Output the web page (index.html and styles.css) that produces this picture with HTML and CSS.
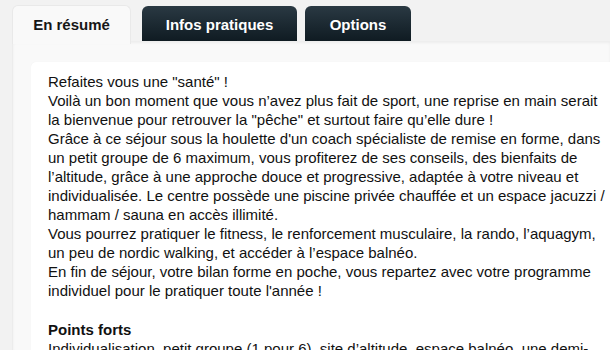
FILE: index.html
```html
<!DOCTYPE html>
<html lang="fr">
<head>
<meta charset="utf-8">
<title>Séjour forme</title>
<link rel="stylesheet" href="styles.css">
</head>
<body>
<div class="page">
  <ul class="tabs">
    <li class="tab tab-active">En résumé</li>
    <li class="tab tab-dark tab-infos">Infos pratiques</li>
    <li class="tab tab-dark tab-options">Options</li>
  </ul>
  <div class="panel">
    <div class="card">
      <p class="text">Refaites vous une "santé" !<br>
Voilà un bon moment que vous n’avez plus fait de sport, une reprise en main serait<br>
la bienvenue pour retrouver la "pêche" et surtout faire qu’elle dure !<br>
Grâce à ce séjour sous la houlette d'un coach spécialiste de remise en forme, dans<br>
un petit groupe de 6 maximum, vous profiterez de ses conseils, des bienfaits de<br>
l’altitude, grâce à une approche douce et progressive, adaptée à votre niveau et<br>
individualisée. Le centre possède une piscine privée chauffée et un espace jacuzzi /<br>
hammam / sauna en accès illimité.<br>
Vous pourrez pratiquer le fitness, le renforcement musculaire, la rando, l’aquagym,<br>
un peu de nordic walking, et accéder à l’espace balnéo.<br>
En fin de séjour, votre bilan forme en poche, vous repartez avec votre programme<br>
individuel pour le pratiquer toute l'année !</p>
      <h3 class="heading">Points forts</h3>
      <p class="text">Individualisation, petit groupe (1 pour 6), site d’altitude, espace balnéo, une demi-</p>
    </div>
  </div>
</div>
</body>
</html>
```
FILE: styles.css
```css
html, body {
  margin: 0;
  padding: 0;
  background: #f2f2f2;
  overflow: hidden;
}

.page {
  box-sizing: border-box;
  width: 610px;
  height: 350px;
  overflow: hidden;
  padding: 5px 0 0 12px;
  font-family: "Liberation Sans", Arial, Helvetica, sans-serif;
}

.tabs {
  display: flex;
  align-items: flex-end;
  list-style: none;
  margin: 0;
  padding: 0;
  height: 36px;
}

.tab {
  font-size: 15px;
  font-weight: bold;
  text-align: center;
  border-radius: 6px 6px 0 0;
  box-sizing: border-box;
}

.tab-active {
  width: 119px;
  height: 39px;
  padding-top: 2px;
  line-height: 34px;
  margin-right: 11px;
  margin-bottom: -3px;
  color: #161616;
  background: #f9f9f9;
  border: 1px solid #e9e9e9;
  border-bottom: none;
  position: relative;
  z-index: 1;
}

.tab-dark {
  height: 35px;
  padding-top: 2px;
  line-height: 33px;
  color: #ffffff;
  background: linear-gradient(#2a3943, #0f1b22);
}

.tab-infos {
  width: 155px;
  margin-right: 8px;
}

.tab-options {
  width: 106px;
}

.panel {
  background: #f9f9f9;
  border-left: 1px solid #ececec;
  box-shadow: inset 0 2px 3px rgba(0, 0, 0, 0.05);
  padding: 21px 0 0 18px;
  height: 309px;
  box-sizing: border-box;
}

.card {
  background: #ffffff;
  border-radius: 5px 0 0 0;
  padding: 10px 0 0 17px;
  height: 288px;
  box-sizing: border-box;
  overflow: hidden;
  box-shadow: 0 0 1px rgba(0, 0, 0, 0.06);
}

.text {
  margin: 0;
  font-size: 15px;
  line-height: 19px;
  color: #111111;
  white-space: nowrap;
}

.heading {
  margin: 20px 0 0 0;
  font-size: 15px;
  line-height: 19px;
  font-weight: bold;
  color: #111111;
}
```
